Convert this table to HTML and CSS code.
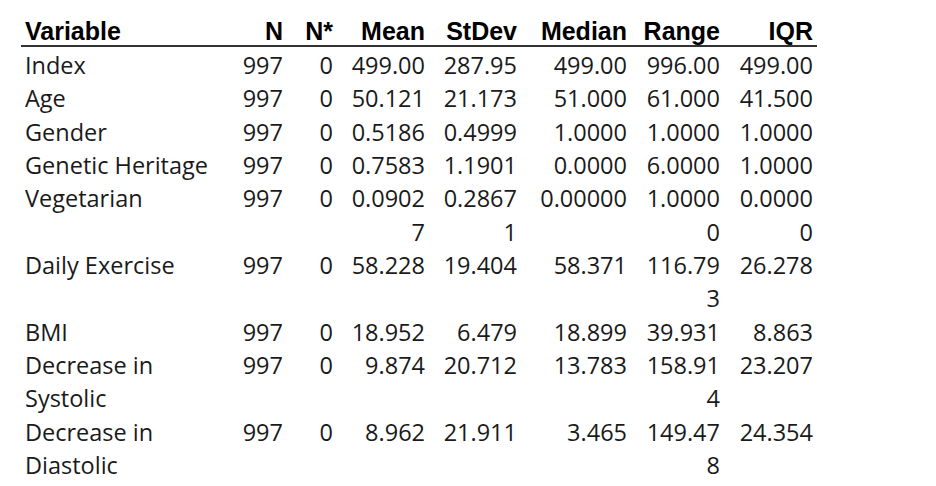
FILE: index.html
```html
<!DOCTYPE html>
<html>
<head>
<meta charset="utf-8">
<link rel="stylesheet" href="styles.css">
</head>
<body>
<table class="stats">
  <colgroup>
    <col class="c-var"><col class="c-n"><col class="c-ns"><col class="c-mean"><col class="c-sd"><col class="c-med"><col class="c-rng"><col class="c-iqr">
  </colgroup>
  <thead>
    <tr><th class="lbl">Variable</th><th>N</th><th>N*</th><th>Mean</th><th>StDev</th><th>Median</th><th>Range</th><th>IQR</th></tr>
  </thead>
  <tbody>
    <tr class="first"><td class="lbl">Index</td><td>997</td><td>0</td><td>499.00</td><td>287.95</td><td>499.00</td><td>996.00</td><td>499.00</td></tr>
    <tr><td class="lbl">Age</td><td>997</td><td>0</td><td>50.121</td><td>21.173</td><td>51.000</td><td>61.000</td><td>41.500</td></tr>
    <tr><td class="lbl">Gender</td><td>997</td><td>0</td><td>0.5186</td><td>0.4999</td><td>1.0000</td><td>1.0000</td><td>1.0000</td></tr>
    <tr><td class="lbl">Genetic Heritage</td><td>997</td><td>0</td><td>0.7583</td><td>1.1901</td><td>0.0000</td><td>6.0000</td><td>1.0000</td></tr>
    <tr><td class="lbl">Vegetarian</td><td>997</td><td>0</td><td>0.09027</td><td>0.28671</td><td>0.00000</td><td>1.00000</td><td>0.00000</td></tr>
    <tr><td class="lbl">Daily Exercise</td><td>997</td><td>0</td><td>58.228</td><td>19.404</td><td>58.371</td><td>116.793</td><td>26.278</td></tr>
    <tr><td class="lbl">BMI</td><td>997</td><td>0</td><td>18.952</td><td>6.479</td><td>18.899</td><td>39.931</td><td>8.863</td></tr>
    <tr><td class="lbl">Decrease in Systolic</td><td>997</td><td>0</td><td>9.874</td><td>20.712</td><td>13.783</td><td>158.914</td><td>23.207</td></tr>
    <tr><td class="lbl">Decrease in Diastolic</td><td>997</td><td>0</td><td>8.962</td><td>21.911</td><td>3.465</td><td>149.478</td><td>24.354</td></tr>
  </tbody>
</table>
</body>
</html>
```
FILE: styles.css
```css
html, body {
  margin: 0;
  background: #ffffff;
}
body {
  padding: 17px 0 0 21px;
}
.stats {
  table-layout: fixed;
  border-collapse: collapse;
  width: 796px;
  color: #1a1a1a;
}
.c-var { width: 195px; }
.c-n { width: 71px; }
.c-ns { width: 50px; }
.c-mean { width: 92px; }
.c-sd { width: 92px; }
.c-med { width: 110px; }
.c-rng { width: 93px; }
.c-iqr { width: 93px; }
.stats th {
  font-family: "Liberation Sans", Arial, sans-serif;
  font-weight: bold;
  font-size: 25px;
  line-height: 28px;
  text-align: right;
  padding: 0 4px;
  border-bottom: 2px solid #333333;
  vertical-align: bottom;
  color: #000000;
}
.stats td {
  font-family: "Open Sans", sans-serif;
  font-size: 23.5px;
  line-height: 33.33px;
  text-align: right;
  padding: 0 4px;
  vertical-align: top;
  word-break: break-all;
}
.stats .first td {
  padding-top: 2px;
}
.stats .lbl {
  text-align: left;
  word-break: normal;
}
```
